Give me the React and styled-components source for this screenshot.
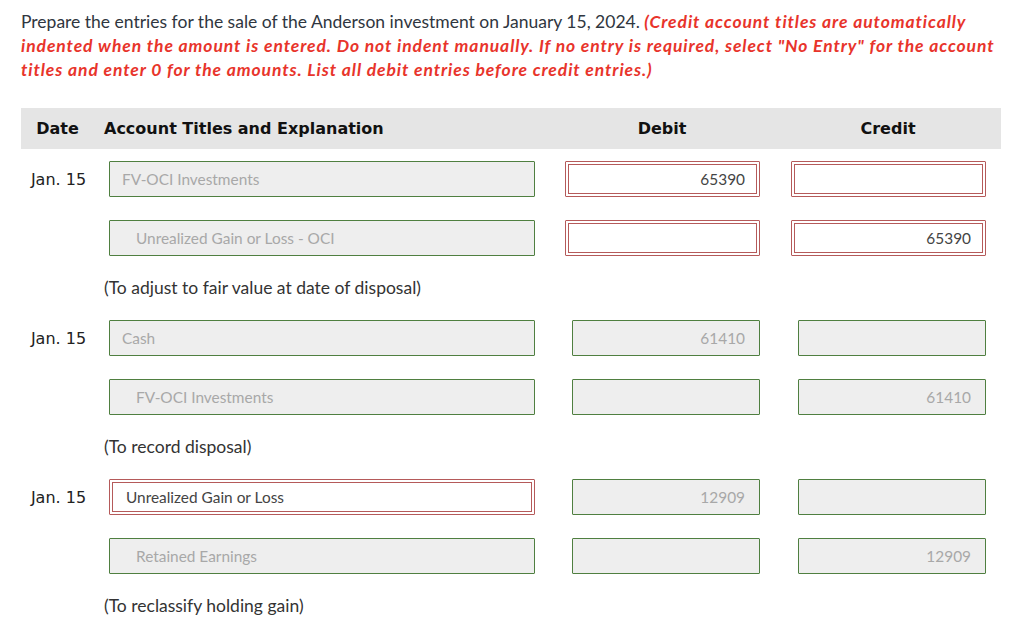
import styled, { createGlobalStyle, css } from 'styled-components';

const GlobalStyle = createGlobalStyle`
  body {
    margin: 0;
    background: #ffffff;
    font-family: 'Lato', 'Liberation Sans', sans-serif;
  }
`;

const entries = [
  {
    note: '(To adjust to fair value at date of disposal)',
    lines: [
      { date: 'Jan. 15', account: 'FV-OCI Investments', debit: '65390', credit: '', accountState: 'ok', amountState: 'wrong' },
      { account: 'Unrealized Gain or Loss - OCI', debit: '', credit: '65390', indent: true, accountState: 'ok', amountState: 'wrong' },
    ],
  },
  {
    note: '(To record disposal)',
    lines: [
      { date: 'Jan. 15', account: 'Cash', debit: '61410', credit: '', accountState: 'ok', amountState: 'ok' },
      { account: 'FV-OCI Investments', debit: '', credit: '61410', indent: true, accountState: 'ok', amountState: 'ok' },
    ],
  },
  {
    note: '(To reclassify holding gain)',
    lines: [
      { date: 'Jan. 15', account: 'Unrealized Gain or Loss', debit: '12909', credit: '', accountState: 'wrong', amountState: 'ok' },
      { account: 'Retained Earnings', debit: '', credit: '12909', indent: true, accountState: 'ok', amountState: 'ok' },
    ],
  },
];

export default function App() {
  return (
    <Page>
      <GlobalStyle />
      <Instructions>
        Prepare the entries for the sale of the Anderson investment on January 15, 2024.{' '}
        <Warning>
          (Credit account titles are automatically indented when the amount is entered. Do not indent manually. If no
          entry is required, select "No Entry" for the account titles and enter 0 for the amounts. List all debit
          entries before credit entries.)
        </Warning>
      </Instructions>

      <HeaderBar>
        <HeaderCell $align="center" $shift="10px">Date</HeaderCell>
        <HeaderCell>Account Titles and Explanation</HeaderCell>
        <HeaderCell $align="center">Debit</HeaderCell>
        <HeaderCell $align="center">Credit</HeaderCell>
      </HeaderBar>

      <Entries>
        {entries.map((entry, i) => (
          <Entry key={i}>
            {entry.lines.map((line, j) => (
              <Line key={j}>
                <DateCell>{line.date || ''}</DateCell>
                <AccountField
                  readOnly
                  value={line.account}
                  $state={line.accountState}
                  $indent={line.indent}
                />
                <AmountCell>
                  <AmountField readOnly value={line.debit} $state={line.amountState} />
                </AmountCell>
                <AmountCell>
                  <AmountField readOnly value={line.credit} $state={line.amountState} />
                </AmountCell>
              </Line>
            ))}
            <Note>{entry.note}</Note>
          </Entry>
        ))}
      </Entries>
    </Page>
  );
}

const Page = styled.div`
  padding: 10px 23px 0 21px;
  width: 980px;
`;

const Instructions = styled.p`
  margin: 0;
  font-family: 'Lato', sans-serif;
  font-size: 17.5px;
  line-height: 24px;
  color: #2f3640;
`;

const Warning = styled.span`
  color: #e8342b;
  font-weight: 700;
  font-style: italic;
  letter-spacing: 0.9px;
`;

const columns = css`
  display: grid;
  grid-template-columns: 83px 445px 226px 226px;
  align-items: center;
`;

const HeaderBar = styled.div`
  ${columns};
  margin-top: 26px;
  height: 41px;
  background: #e5e5e5;
`;

const HeaderCell = styled.div`
  font-family: 'DejaVu Sans', sans-serif;
  font-weight: 700;
  font-size: 16px;
  color: #111111;
  text-align: ${(props) => props.$align || 'left'};
  padding-right: ${(props) => props.$shift || '0'};
`;

const Entries = styled.div`
  display: flex;
  flex-direction: column;
  padding-top: 12px;
`;

const Entry = styled.div`
  display: flex;
  flex-direction: column;
  gap: 23px;
  padding-bottom: 20px;
`;

const Line = styled.div`
  ${columns};
  height: 36px;
`;

const DateCell = styled.div`
  font-family: 'DejaVu Sans', sans-serif;
  font-size: 16px;
  color: #222222;
  text-align: center;
  padding-right: 8px;
`;

const fieldState = css`
  box-sizing: border-box;
  height: 36px;
  font-family: 'Lato', sans-serif;
  font-size: 15.4px;
  outline: none;
  border-radius: 1px;
  ${(props) =>
    props.$state === 'wrong'
      ? css`
          background: #ffffff;
          color: #444444;
          border: 1px solid #b55a5a;
          box-shadow: inset 0 0 0 2px #ffffff, inset 0 0 0 3px #b55a5a;
        `
      : css`
          background: #eeeeee;
          color: #a8a8a8;
          border: 1px solid #4f7f40;
        `}
`;

const AccountField = styled.input`
  ${fieldState};
  width: 426px;
  margin-left: 5px;
  padding: 0 0 0 ${(props) => (props.$indent ? '26px' : props.$state === 'wrong' ? '16px' : '12px')};
`;

const AmountCell = styled.div`
  display: flex;
  justify-content: flex-end;
  padding-right: 15px;
`;

const AmountField = styled.input`
  ${fieldState};
  width: ${(props) => (props.$state === 'wrong' ? '195px' : '188px')};
  text-align: right;
  padding: 0 14px 0 0;
`;

const Note = styled.div`
  margin-top: -3px;
  padding-left: 83px;
  font-family: 'Lato', sans-serif;
  font-size: 17.5px;
  line-height: 24px;
  color: #333333;
`;
